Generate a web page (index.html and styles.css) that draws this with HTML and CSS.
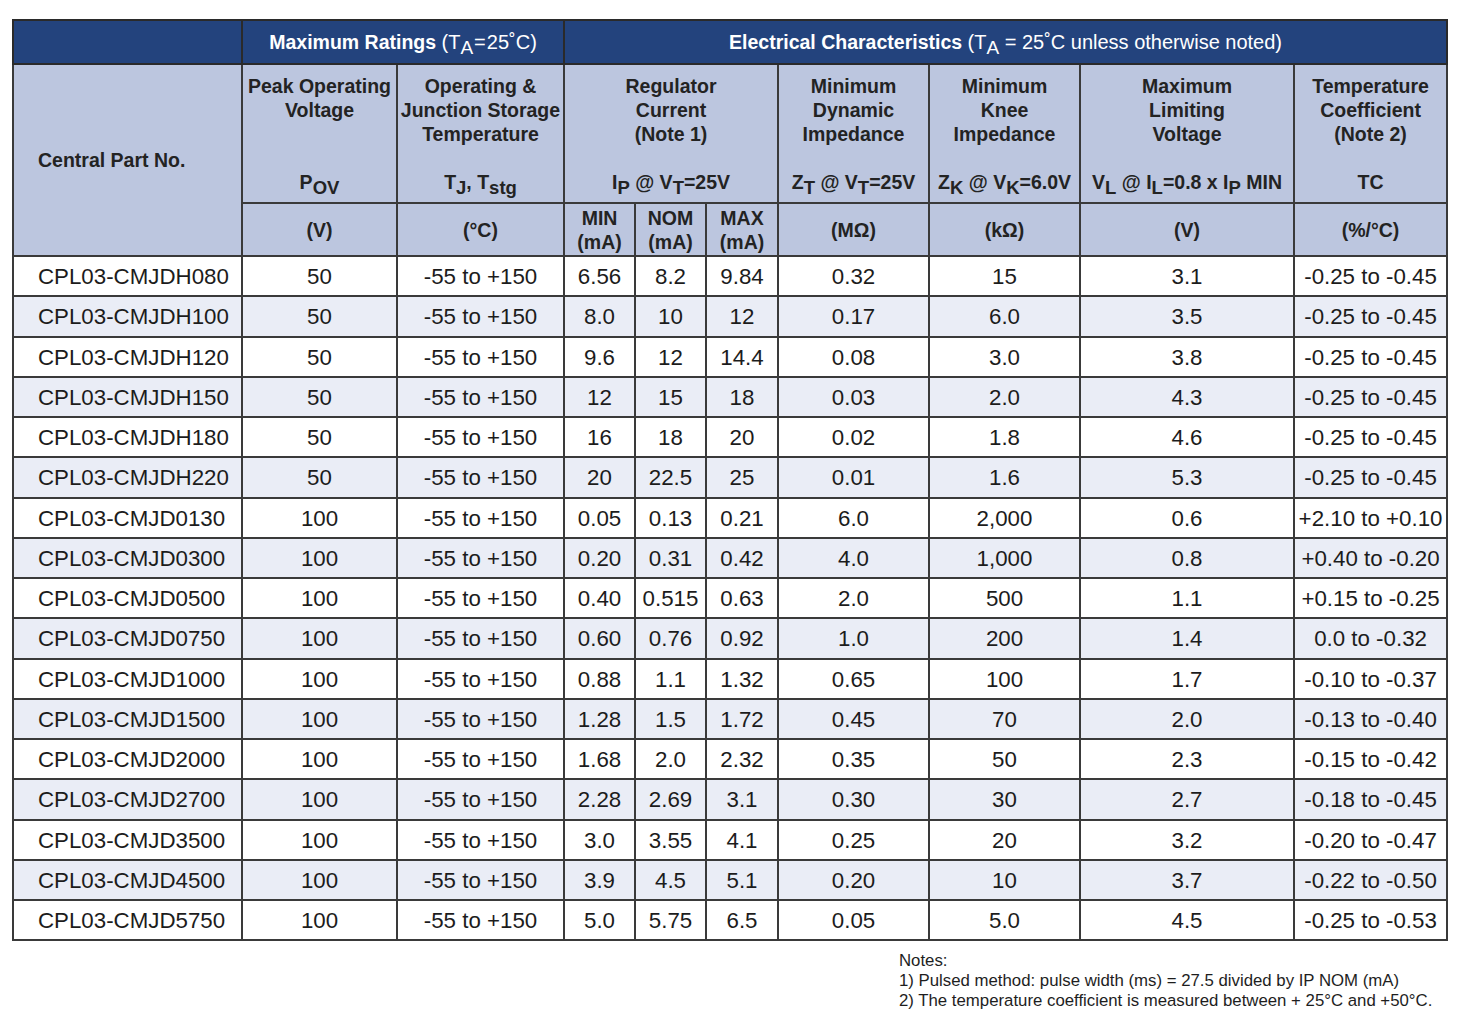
FILE: index.html
```html
<!DOCTYPE html>
<html>
<head>
<meta charset="utf-8">
<link rel="stylesheet" href="styles.css">
</head>
<body>
<div class="page">
<table class="spec">
<colgroup>
<col class="c-part"><col class="c-pov"><col class="c-temp"><col class="c-i"><col class="c-i"><col class="c-i3"><col class="c-z"><col class="c-z"><col class="c-vl"><col class="c-tc">
</colgroup>
<thead>
<tr class="r-title">
<th></th>
<th colspan="2"><b>Maximum Ratings</b> <span class="nrm">(T<span class="s">A</span><span class="eq">=</span>25˚C)</span></th>
<th colspan="7"><b>Electrical Characteristics</b> <span class="nrm">(T<span class="s">A</span> = 25˚C unless otherwise noted)</span></th>
</tr>
<tr class="r-head">
<th rowspan="2" class="part">Central Part No.</th>
<th><div class="lbl">Peak Operating<br>Voltage</div><div class="sym">P<span class="s">OV</span></div></th>
<th><div class="lbl">Operating &amp;<br>Junction Storage<br>Temperature</div><div class="sym">T<span class="s">J</span>, T<span class="s">stg</span></div></th>
<th colspan="3"><div class="lbl">Regulator<br>Current<br>(Note 1)</div><div class="sym">I<span class="s">P</span> @ V<span class="s">T</span>=25V</div></th>
<th><div class="lbl">Minimum<br>Dynamic<br>Impedance</div><div class="sym">Z<span class="s">T</span> @ V<span class="s">T</span>=25V</div></th>
<th><div class="lbl">Minimum<br>Knee<br>Impedance</div><div class="sym">Z<span class="s">K</span> @ V<span class="s">K</span>=6.0V</div></th>
<th><div class="lbl">Maximum<br>Limiting<br>Voltage</div><div class="sym">V<span class="s">L</span> @ I<span class="s">L</span>=0.8 x I<span class="s">P</span> MIN</div></th>
<th><div class="lbl">Temperature<br>Coefficient<br>(Note 2)</div><div class="sym">TC</div></th>
</tr>
<tr class="r-unit">
<th>(V)</th>
<th>(°C)</th>
<th>MIN<br>(mA)</th>
<th>NOM<br>(mA)</th>
<th>MAX<br>(mA)</th>
<th>(MΩ)</th>
<th>(kΩ)</th>
<th>(V)</th>
<th>(%/°C)</th>
</tr>
</thead>
<tbody>
<tr><td>CPL03-CMJDH080</td><td>50</td><td>-55 to +150</td><td>6.56</td><td>8.2</td><td>9.84</td><td>0.32</td><td>15</td><td>3.1</td><td>-0.25 to -0.45</td></tr>
<tr><td>CPL03-CMJDH100</td><td>50</td><td>-55 to +150</td><td>8.0</td><td>10</td><td>12</td><td>0.17</td><td>6.0</td><td>3.5</td><td>-0.25 to -0.45</td></tr>
<tr><td>CPL03-CMJDH120</td><td>50</td><td>-55 to +150</td><td>9.6</td><td>12</td><td>14.4</td><td>0.08</td><td>3.0</td><td>3.8</td><td>-0.25 to -0.45</td></tr>
<tr><td>CPL03-CMJDH150</td><td>50</td><td>-55 to +150</td><td>12</td><td>15</td><td>18</td><td>0.03</td><td>2.0</td><td>4.3</td><td>-0.25 to -0.45</td></tr>
<tr><td>CPL03-CMJDH180</td><td>50</td><td>-55 to +150</td><td>16</td><td>18</td><td>20</td><td>0.02</td><td>1.8</td><td>4.6</td><td>-0.25 to -0.45</td></tr>
<tr><td>CPL03-CMJDH220</td><td>50</td><td>-55 to +150</td><td>20</td><td>22.5</td><td>25</td><td>0.01</td><td>1.6</td><td>5.3</td><td>-0.25 to -0.45</td></tr>
<tr><td>CPL03-CMJD0130</td><td>100</td><td>-55 to +150</td><td>0.05</td><td>0.13</td><td>0.21</td><td>6.0</td><td>2,000</td><td>0.6</td><td>+2.10 to +0.10</td></tr>
<tr><td>CPL03-CMJD0300</td><td>100</td><td>-55 to +150</td><td>0.20</td><td>0.31</td><td>0.42</td><td>4.0</td><td>1,000</td><td>0.8</td><td>+0.40 to -0.20</td></tr>
<tr><td>CPL03-CMJD0500</td><td>100</td><td>-55 to +150</td><td>0.40</td><td>0.515</td><td>0.63</td><td>2.0</td><td>500</td><td>1.1</td><td>+0.15 to -0.25</td></tr>
<tr><td>CPL03-CMJD0750</td><td>100</td><td>-55 to +150</td><td>0.60</td><td>0.76</td><td>0.92</td><td>1.0</td><td>200</td><td>1.4</td><td>0.0 to -0.32</td></tr>
<tr><td>CPL03-CMJD1000</td><td>100</td><td>-55 to +150</td><td>0.88</td><td>1.1</td><td>1.32</td><td>0.65</td><td>100</td><td>1.7</td><td>-0.10 to -0.37</td></tr>
<tr><td>CPL03-CMJD1500</td><td>100</td><td>-55 to +150</td><td>1.28</td><td>1.5</td><td>1.72</td><td>0.45</td><td>70</td><td>2.0</td><td>-0.13 to -0.40</td></tr>
<tr><td>CPL03-CMJD2000</td><td>100</td><td>-55 to +150</td><td>1.68</td><td>2.0</td><td>2.32</td><td>0.35</td><td>50</td><td>2.3</td><td>-0.15 to -0.42</td></tr>
<tr><td>CPL03-CMJD2700</td><td>100</td><td>-55 to +150</td><td>2.28</td><td>2.69</td><td>3.1</td><td>0.30</td><td>30</td><td>2.7</td><td>-0.18 to -0.45</td></tr>
<tr><td>CPL03-CMJD3500</td><td>100</td><td>-55 to +150</td><td>3.0</td><td>3.55</td><td>4.1</td><td>0.25</td><td>20</td><td>3.2</td><td>-0.20 to -0.47</td></tr>
<tr><td>CPL03-CMJD4500</td><td>100</td><td>-55 to +150</td><td>3.9</td><td>4.5</td><td>5.1</td><td>0.20</td><td>10</td><td>3.7</td><td>-0.22 to -0.50</td></tr>
<tr><td>CPL03-CMJD5750</td><td>100</td><td>-55 to +150</td><td>5.0</td><td>5.75</td><td>6.5</td><td>0.05</td><td>5.0</td><td>4.5</td><td>-0.25 to -0.53</td></tr>
</tbody>
</table>
<div class="notes">
<div>Notes:</div>
<div>1) Pulsed method: pulse width (ms) = 27.5 divided by IP NOM (mA)</div>
<div>2) The temperature coefficient is measured between + 25°C and +50°C.</div>
</div>
</div>
</body>
</html>
```
FILE: styles.css
```css
html, body {
  margin: 0;
  padding: 0;
  background: #ffffff;
}
.page {
  padding: 19px 0 0 12px;
  font-family: "Liberation Sans", Arial, sans-serif;
  color: #1e1e1e;
}
.spec {
  border-collapse: collapse;
  table-layout: fixed;
  width: 1436px;
  border: 2px solid #222222;
}
.c-part { width: 229px; }
.c-pov { width: 155px; }
.c-temp { width: 167px; }
.c-i { width: 71px; }
.c-i3 { width: 72px; }
.c-z { width: 151px; }
.c-vl { width: 214px; }
.c-tc { width: 153px; }

.spec th, .spec td {
  border: 2px solid #3a3a3a;
  padding: 0;
  text-align: center;
  overflow: visible;
  white-space: nowrap;
}
.spec th {
  font-weight: bold;
  font-size: 19.5px;
  line-height: 24px;
  color: #232323;
}
.r-title th {
  background: #23437d;
  color: #ffffff;
  height: 42px;
  vertical-align: middle;
  border-color: #2a2a2a;
}
.r-title .nrm {
  font-weight: normal;
  font-size: 20px;
}
.r-title .eq {
  margin: 0 1px;
}
.r-head th, .r-unit th {
  background: #bcc6df;
}
.r-head th {
  height: 128px;
  vertical-align: top;
  padding-top: 9px;
}
.r-head th.part {
  vertical-align: middle;
  text-align: left;
  padding: 0 0 0 24px;
}
.lbl {
  height: 96px;
}
.sym {
  line-height: 24px;
}
.r-unit th {
  height: 51px;
  vertical-align: middle;
}
.s {
  font-size: 0.95em;
  vertical-align: -0.28em;
  line-height: 0;
}
.spec td {
  font-size: 22.3px;
  height: 36.25px;
  padding-top: 2px;
  line-height: 24px;
  vertical-align: middle;
  color: #1c1c1c;
}
.spec td:first-child {
  text-align: left;
  padding-left: 24px;
}
.spec tbody tr:nth-child(even) td {
  background: #eaedf6;
}
.notes {
  margin: 10px 0 0 887px;
  font-size: 16.8px;
  line-height: 20px;
  color: #1e1e1e;
}
```
